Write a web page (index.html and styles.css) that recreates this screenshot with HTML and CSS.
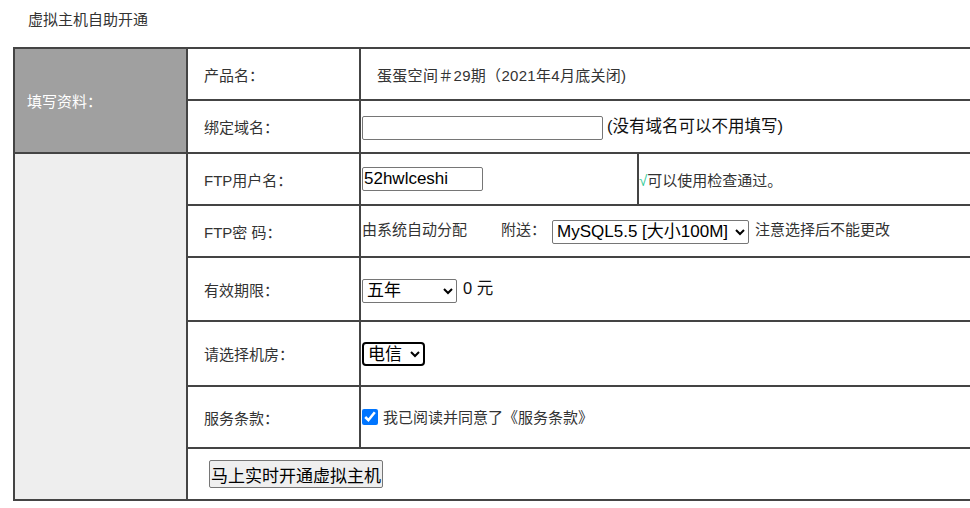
FILE: index.html
```html
<!DOCTYPE html>
<html lang="zh-CN">
<head>
<meta charset="utf-8">
<title>虚拟主机自助开通</title>
<link rel="stylesheet" href="styles.css">
</head>
<body>
<div class="page">
  <div class="title">虚拟主机自助开通</div>
  <table class="form">
    <colgroup>
      <col class="c1">
      <col class="c2">
      <col class="c3">
      <col class="c4">
    </colgroup>
    <tr class="r-product">
      <td class="side side-dark" rowspan="2">填写资料：</td>
      <td class="label">产品名：</td>
      <td class="value" colspan="2"><span class="product">蛋蛋空间＃29期（2021年4月底关闭)</span></td>
    </tr>
    <tr class="r-domain">
      <td class="label">绑定域名：</td>
      <td class="value" colspan="2"><input class="in in-domain" type="text"><span class="big">(没有域名可以不用填写)</span></td>
    </tr>
    <tr class="r-user">
      <td class="side side-light" rowspan="6"></td>
      <td class="label">FTP用户名：</td>
      <td class="value"><input class="in in-user" type="text" value="52hwlceshi"></td>
      <td class="value check"><span class="tick">√</span>可以使用检查通过。</td>
    </tr>
    <tr class="r-pass">
      <td class="label">FTP密 码：</td>
      <td class="value" colspan="2"><span class="small">由系统自动分配</span><span class="small gift">附送：</span><select class="sel sel-db"><option>MySQL5.5 [大小100M]</option></select><span class="small note">注意选择后不能更改</span></td>
    </tr>
    <tr class="r-term">
      <td class="label">有效期限：</td>
      <td class="value" colspan="2"><select class="sel sel-year"><option>五年</option></select><span class="big price">0 元</span></td>
    </tr>
    <tr class="r-room">
      <td class="label">请选择机房：</td>
      <td class="value" colspan="2"><select class="sel sel-room"><option>电信</option></select></td>
    </tr>
    <tr class="r-terms">
      <td class="label">服务条款：</td>
      <td class="value" colspan="2"><label class="agree"><input class="chk" type="checkbox" checked><span class="small">我已阅读并同意了《服务条款》</span></label></td>
    </tr>
    <tr class="r-submit">
      <td class="btn-cell" colspan="3"><button class="btn" type="button">马上实时开通虚拟主机</button></td>
    </tr>
  </table>
</div>
</body>
</html>
```
FILE: styles.css
```css
html, body {
  margin: 0;
  padding: 0;
  overflow: hidden;
  background: #fff;
}
body {
  font-family: "Liberation Sans", "Noto Sans CJK SC", sans-serif;
  font-size: 15px;
  color: #333;
}
.page {
  padding: 10px 0 0 13px;
  width: 980px;
}
.title {
  padding-left: 15px;
  height: 37px;
  line-height: 20px;
  font-size: 15px;
  color: #333;
}
.form {
  border-collapse: collapse;
  border: 2px solid #444;
  table-layout: fixed;
  width: 970px;
}
.c1 { width: 173px; }
.c2 { width: 173px; }
.c3 { width: 278px; }
.c4 { width: 346px; }
.form td {
  border: 2px solid #444;
  padding: 0;
  vertical-align: middle;
}
.r-product { height: 52px; }
.r-domain { height: 53px; }
.r-user { height: 52px; }
.r-pass { height: 52px; }
.r-term { height: 64px; }
.r-room { height: 65px; }
.r-terms { height: 62px; }
.r-submit { height: 52px; }
.side-dark {
  background: #a0a0a0;
  color: #fff;
  padding-left: 12px !important;
}
.side-light {
  background: #eeeeee;
}
.label {
  padding-left: 16px !important;
  color: #333;
}
.value {
  padding-left: 1px !important;
  color: #333;
}
.product {
  padding-left: 15px;
  letter-spacing: 0.3px;
}
.big {
  font-size: 16.5px;
  color: #111;
}
.small {
  font-size: 15px;
  color: #333;
}
.in {
  box-sizing: border-box;
  height: 24px;
  font-family: "Liberation Sans", "Noto Sans CJK SC", sans-serif;
  font-size: 17px;
  color: #000;
  border: 1px solid #767676;
  border-radius: 2px;
  padding: 0 1px;
  vertical-align: middle;
  margin: 0 4px 0 0;
}
.in-domain { width: 241px; }
.in-user { width: 121px; }
.check {
  padding-left: 0 !important;
}
.tick {
  color: #3c9;
  font-size: 15px;
}
.gift {
  margin-left: 34px;
  margin-right: 6px;
}
.sel {
  box-sizing: border-box;
  height: 24px;
  font-family: "Liberation Sans", "Noto Sans CJK SC", sans-serif;
  font-size: 17px;
  color: #000;
  border: 1px solid #767676;
  border-radius: 2px;
  background: #fff;
  vertical-align: middle;
  margin: 0;
}
.sel-db { width: 197px; }
.note { margin-left: 6px; }
.sel-year { width: 95px; }
.price { margin-left: 6px; }
.sel-room {
  width: 63px;
  border: 2px solid #000;
  border-radius: 4px;
}
.agree {
  display: inline-flex;
  align-items: center;
  gap: 5px;
}
.chk {
  width: 16px;
  height: 16px;
  margin: 0;
  accent-color: #0075ff;
}
.btn-cell {
  padding-left: 21px !important;
}
.btn {
  box-sizing: border-box;
  height: 28px;
  padding: 0 1px;
  font-family: "Liberation Sans", "Noto Sans CJK SC", sans-serif;
  font-size: 17px;
  color: #000;
  background: #efefef;
  border: 1px solid #767676;
  border-radius: 2px;
}
```
